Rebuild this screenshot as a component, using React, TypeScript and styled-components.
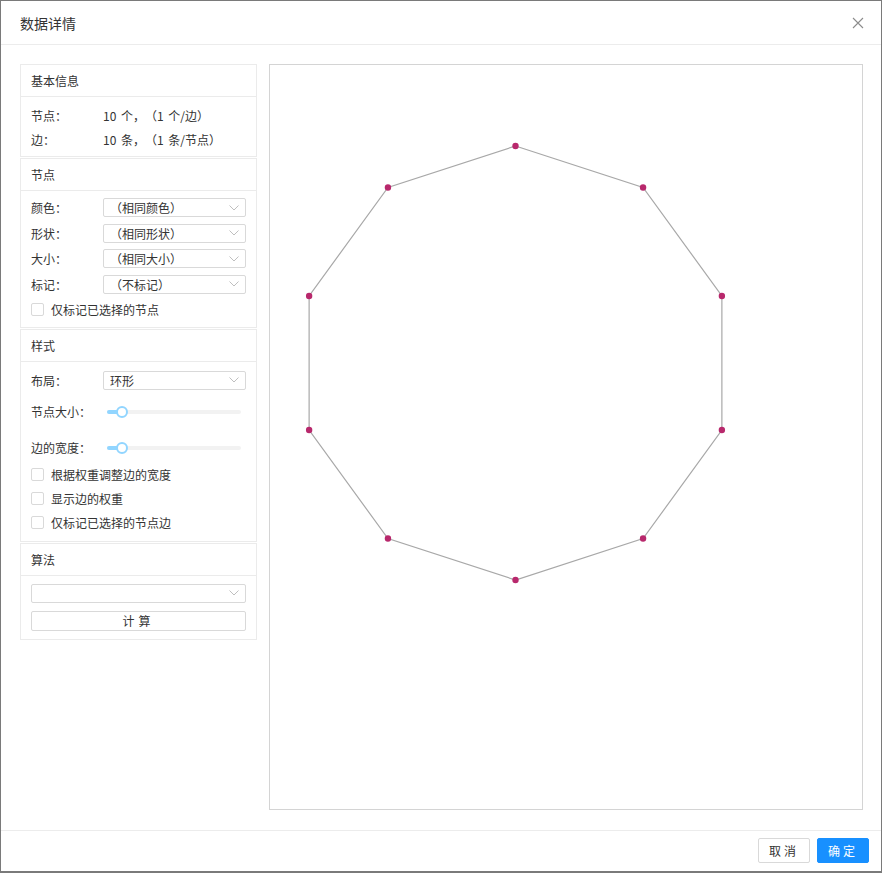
import React from "react";
import styled, { createGlobalStyle } from "styled-components";

const Global = createGlobalStyle`
  html, body {
    margin: 0;
    padding: 0;
    background: #7a7a7a;
  }
  body {
    font-family: "Noto Sans CJK SC", "Noto Sans", sans-serif;
    font-size: 12px;
    color: #333;
    text-spacing-trim: space-all;
  }
  * { box-sizing: border-box; }
`;

const Page = styled.div`
  padding: 1px 1px 2px 1px;
  height: 873px;
`;

const Modal = styled.div`
  background: #fff;
  height: 870px;
  display: flex;
  flex-direction: column;
`;

const Header = styled.div`
  height: 44px;
  border-bottom: 1px solid #ececec;
  display: flex;
  align-items: center;
  justify-content: space-between;
  padding: 0 16px 0 19px;
`;

const Title = styled.div`
  font-size: 14px;
  color: #333;
`;

const Close = styled.button`
  border: none;
  background: none;
  padding: 0;
  width: 14px;
  height: 14px;
  display: flex;
  align-items: center;
  justify-content: center;
  cursor: pointer;
`;

const Body = styled.div`
  flex: 1;
  display: flex;
  gap: 12px;
  padding: 19px 18px 20px 19px;
  min-height: 0;
`;

const Side = styled.div`
  width: 237px;
  display: flex;
  flex-direction: column;
  gap: 1px;
`;

const Card = styled.div`
  border: 1px solid #ebebeb;
`;

const CardHead = styled.div`
  height: 32px;
  border-bottom: 1px solid #ebebeb;
  padding: 0 10px;
  display: flex;
  align-items: center;
  color: #333;
`;

const CardBody = styled.div<{ $pad?: string; $gap?: number }>`
  padding: ${(p) => p.$pad || "6px 10px 5px"};
  display: flex;
  flex-direction: column;
  gap: ${(p) => p.$gap ?? 0}px;
`;

const Row = styled.div<{ $h?: number }>`
  display: flex;
  align-items: center;
  height: ${(p) => p.$h ?? 24}px;
`;

const Label = styled.div`
  width: 72px;
  flex-shrink: 0;
  color: #333;
`;

const Value = styled.div`
  color: #333;
  word-spacing: 2px;
`;

const Select = styled.div`
  flex: 1;
  height: 19px;
  border: 1px solid #d9d9d9;
  border-radius: 2px;
  display: flex;
  align-items: center;
  justify-content: space-between;
  padding: 0 6px 0 6px;
  color: #333;
  background: #fff;
`;

const Chevron = () => (
  <svg width="10" height="6" viewBox="0 0 10 6">
    <path d="M0.5 0.5 L5 5 L9.5 0.5" fill="none" stroke="#bfbfbf" strokeWidth="1" />
  </svg>
);

const Check = styled.div`
  display: flex;
  align-items: center;
  gap: 7px;
  height: 24px;
  color: #333;
`;

const Box = styled.span`
  width: 13px;
  height: 13px;
  border: 1px solid #d9d9d9;
  border-radius: 2px;
  background: #fff;
`;

const SliderWrap = styled.div`
  flex: 1;
  position: relative;
  height: 14px;
  margin: 0 5px 0 4px;
`;

const Track = styled.div`
  position: absolute;
  left: 0;
  right: 0;
  top: 5px;
  height: 4px;
  border-radius: 2px;
  background: #f2f2f2;
`;

const Fill = styled.div`
  position: absolute;
  left: 0;
  top: 5px;
  height: 4px;
  border-radius: 2px;
  background: #91d5ff;
`;

const Handle = styled.div`
  position: absolute;
  top: 1px;
  width: 12px;
  height: 12px;
  border-radius: 50%;
  border: 2px solid #91d5ff;
  background: #fff;
`;

const Slider = ({ value }: { value: number }) => (
  <SliderWrap>
    <Track />
    <Fill style={{ width: value }} />
    <Handle style={{ left: value - 6 }} />
  </SliderWrap>
);

const Btn = styled.button<{ $primary?: boolean }>`
  height: 25px;
  min-width: 51px;
  border-radius: 2px;
  border: 1px solid ${(p) => (p.$primary ? "#1890ff" : "#d9d9d9")};
  background: ${(p) => (p.$primary ? "#1890ff" : "#fff")};
  color: ${(p) => (p.$primary ? "#fff" : "#333")};
  font-family: inherit;
  font-size: 12px;
  padding: 0 10px;
  letter-spacing: 3px;
  cursor: pointer;
`;

const WideBtn = styled.button`
  height: 20px;
  width: 100%;
  border: 1px solid #d9d9d9;
  border-radius: 2px;
  background: #fff;
  font-family: inherit;
  font-size: 12px;
  color: #333;
  letter-spacing: 4px;
  padding: 0;
`;

const Canvas = styled.div`
  flex: 1;
  border: 1px solid #d4d4d4;
  background: #fff;
`;

const Footer = styled.div`
  height: 41px;
  border-top: 1px solid #ececec;
  display: flex;
  align-items: center;
  justify-content: flex-end;
  gap: 7px;
  padding: 0 12px 1px 0;
`;

const Graph = () => {
  const cx = 245.5;
  const cy = 298;
  const r = 217;
  const pts = Array.from({ length: 10 }, (_, i) => {
    const a = (-90 + i * 36) * (Math.PI / 180);
    return [cx + r * Math.cos(a), cy + r * Math.sin(a)];
  });
  return (
    <svg width="100%" height="100%">
      <polygon
        points={pts.map((p) => p.join(",")).join(" ")}
        fill="none"
        stroke="#a8a8a8"
        strokeWidth="1.2"
      />
      {pts.map((p, i) => (
        <circle key={i} cx={p[0]} cy={p[1]} r="3.2" fill="#b8286c" />
      ))}
    </svg>
  );
};

export default function App() {
  return (
    <Page>
      <Global />
      <Modal>
        <Header>
          <Title>数据详情</Title>
          <Close>
            <svg width="12" height="12" viewBox="0 0 12 12">
              <path d="M1 1 L11 11 M11 1 L1 11" stroke="#8c8c8c" strokeWidth="1.1" />
            </svg>
          </Close>
        </Header>
        <Body>
          <Side>
            <Card>
              <CardHead>基本信息</CardHead>
              <CardBody>
                <Row>
                  <Label>节点：</Label>
                  <Value>10 个，（1 个/边）</Value>
                </Row>
                <Row>
                  <Label>边：</Label>
                  <Value>10 条，（1 条/节点）</Value>
                </Row>
              </CardBody>
            </Card>
            <Card>
              <CardHead>节点</CardHead>
              <CardBody $pad="7px 10px 11px" $gap={6.6}>
                {[
                  ["颜色：", "（相同颜色）"],
                  ["形状：", "（相同形状）"],
                  ["大小：", "（相同大小）"],
                  ["标记：", "（不标记）"],
                ].map(([l, v]) => (
                  <Row key={l} $h={19}>
                    <Label>{l}</Label>
                    <Select>
                      <span>{v}</span>
                      <Chevron />
                    </Select>
                  </Row>
                ))}
                <Check style={{ height: 13, marginTop: 2.4 }}>
                  <Box />
                  仅标记已选择的节点
                </Check>
              </CardBody>
            </Card>
            <Card>
              <CardHead>样式</CardHead>
              <CardBody $pad="9px 10px 6px">
                <Row $h={19}>
                  <Label>布局：</Label>
                  <Select>
                    <span>环形</span>
                    <Chevron />
                  </Select>
                </Row>
                <Row $h={24} style={{ marginTop: 10 }}>
                  <Label>节点大小：</Label>
                  <Slider value={15} />
                </Row>
                <Row $h={24} style={{ marginTop: 12 }}>
                  <Label>边的宽度：</Label>
                  <Slider value={15} />
                </Row>
                <Check style={{ marginTop: 3 }}>
                  <Box />
                  根据权重调整边的宽度
                </Check>
                <Check>
                  <Box />
                  显示边的权重
                </Check>
                <Check>
                  <Box />
                  仅标记已选择的节点边
                </Check>
              </CardBody>
            </Card>
            <Card>
              <CardHead>算法</CardHead>
              <CardBody $pad="8px 10px 8px" $gap={8}>
                <Row $h={19}>
                  <Select>
                    <span />
                    <Chevron />
                  </Select>
                </Row>
                <WideBtn>计算</WideBtn>
              </CardBody>
            </Card>
          </Side>
          <Canvas>
            <Graph />
          </Canvas>
        </Body>
        <Footer>
          <Btn>取消</Btn>
          <Btn $primary>确定</Btn>
        </Footer>
      </Modal>
    </Page>
  );
}
